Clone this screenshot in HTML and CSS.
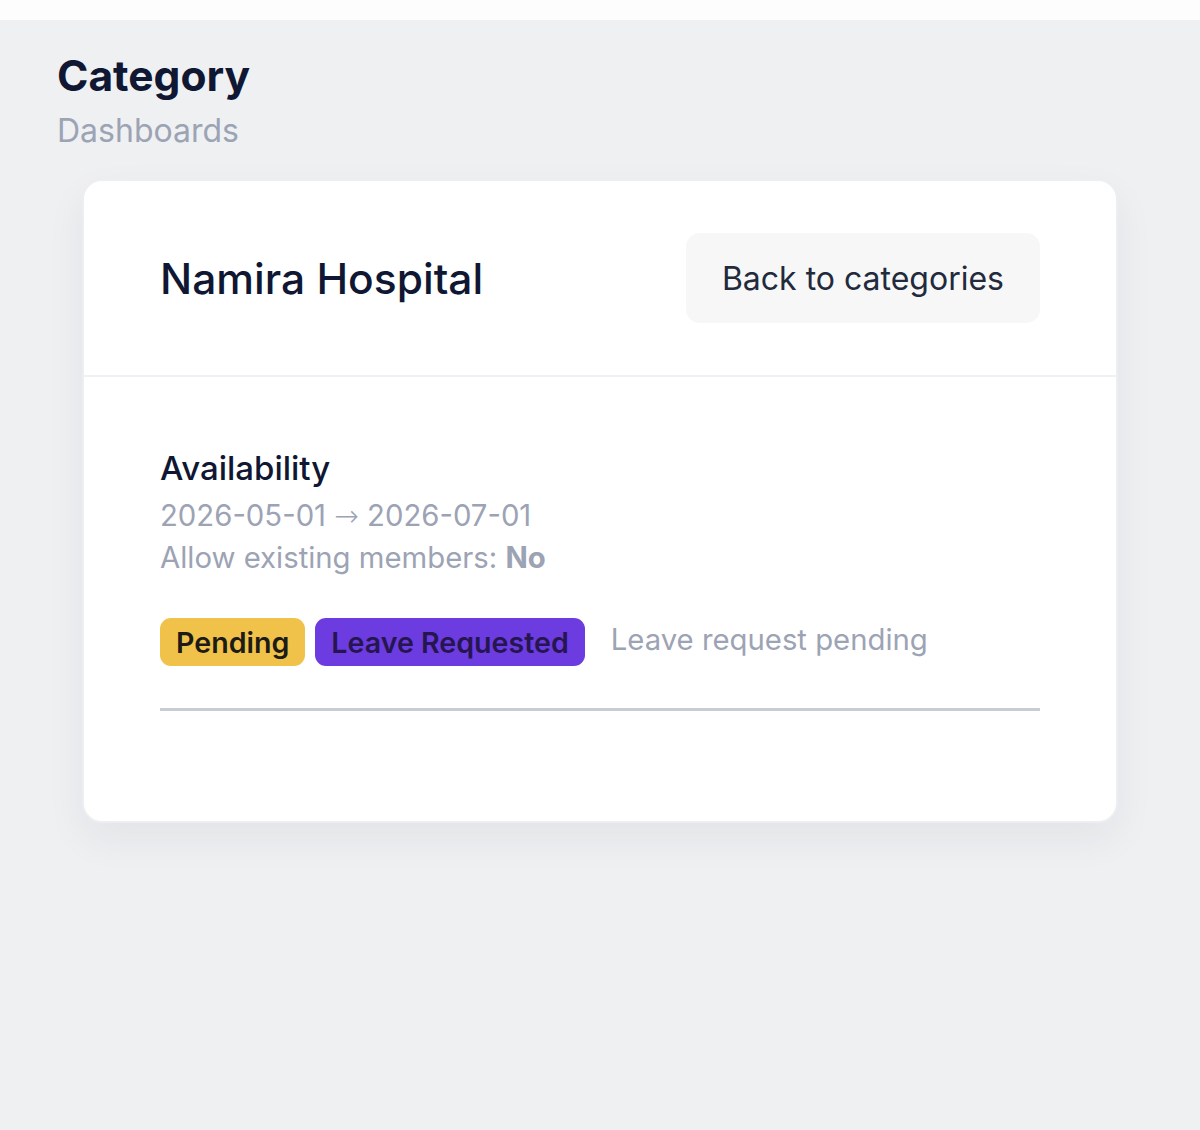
FILE: index.html
```html
<!DOCTYPE html>
<html>
<head>
<meta charset="utf-8">
<link rel="stylesheet" href="styles.css">
</head>
<body>
<div class="topbar"></div>
<main class="page">
  <header class="page-head">
    <h1 class="title">Category</h1>
    <div class="subtitle">Dashboards</div>
  </header>
  <section class="card">
    <div class="card-head">
      <h2 class="card-title">Namira Hospital</h2>
      <button class="btn">Back to categories</button>
    </div>
    <div class="card-body">
      <h3 class="section-title">Availability</h3>
      <div class="meta">2026-05-01 <span class="arrow">→</span> 2026-07-01</div>
      <div class="meta">Allow existing members: <b>No</b></div>
      <div class="status-row">
        <span class="badge badge-yellow">Pending</span>
        <span class="badge badge-purple">Leave Requested</span>
        <span class="status-note">Leave request pending</span>
      </div>
      <hr class="rule">
    </div>
  </section>
</main>
</body>
</html>
```
FILE: styles.css
```css
* { box-sizing: border-box; }
html, body { margin: 0; padding: 0; }
body {
  background: #eff0f2;
  font-family: Inter, "Noto Sans", sans-serif;
  min-height: 1130px;
}
.topbar { height: 20px; background: #fdfdfe; }
.page { padding: 28px 82px 0 57px; }
.page-head { margin-bottom: 27px; }
.title {
  margin: 0;
  font-size: 42.5px;
  line-height: 56px;
  font-weight: 700;
  color: #0f1733;
}
.subtitle {
  font-size: 32px;
  line-height: 42px;
  color: #9ca3b4;
  margin-top: 6px;
}
.card {
  margin-left: 25px;
  width: 1036px;
  background: #fff;
  border: 2px solid #eceef1;
  border-radius: 20px;
  box-shadow: 0 16px 40px rgba(20, 30, 50, 0.06);
}
.card-head {
  display: flex;
  align-items: center;
  justify-content: space-between;
  padding: 52px 76px 52px 76px;
  border-bottom: 2px solid #eef0f3;
}
.card-title {
  margin: 0;
  font-size: 42.5px;
  font-weight: 500;
  color: #0f1733;
}
.btn {
  font-family: inherit;
  border: none;
  background: #f7f7f8;
  border-radius: 14px;
  height: 90px;
  padding: 0 36px;
  font-size: 32px;
  color: #222a3c;
}
.card-body { padding: 71px 76px 110px 76px; }
.section-title {
  margin: 0 0 6px 0;
  font-size: 33px;
  line-height: 40px;
  font-weight: 500;
  color: #0f1733;
}
.meta {
  font-size: 29.3px;
  line-height: 42px;
  color: #9ca3b4;
}
.arrow { font-family: "Noto Sans", "DejaVu Sans", sans-serif; font-weight: 300; }
.meta b { font-weight: 700; color: #9ca3b4; }
.status-row {
  display: flex;
  align-items: center;
  gap: 10px;
  margin-top: 39px;
}
.badge {
  display: inline-flex;
  align-items: center;
  height: 48px;
  padding: 0 16px;
  border-radius: 11px;
  font-size: 28.6px;
  font-weight: 600;
}
.badge-yellow { background: #f0c24a; color: #1c1b17; }
.badge-purple { background: #6c3ce1; color: #26164f; }
.status-note {
  margin-left: 16px;
  font-size: 29.3px;
  color: #9ca3b4;
  margin-top: -6px;
}
.rule {
  margin: 42px 0 0 0;
  border: none;
  height: 3px;
  background: #c8ccd6;
}
```
